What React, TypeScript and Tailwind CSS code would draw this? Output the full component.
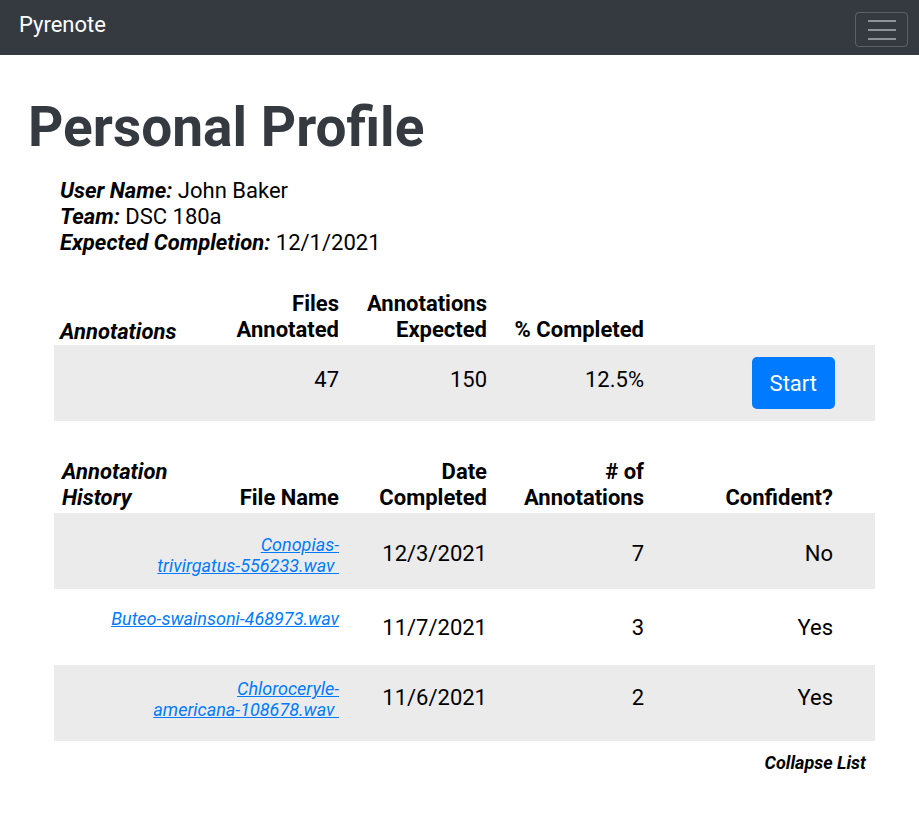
import { Fragment } from "react";

type HistoryRow = {
  lines: string[];
  date: string;
  count: number;
  confident: string;
  shaded: boolean;
  pad: string;
};

const history: HistoryRow[] = [
  {
    lines: ["Conopias-", "trivirgatus-556233.wav\u00a0"],
    date: "12/3/2021",
    count: 7,
    confident: "No",
    shaded: true,
    pad: "pt-[21px]",
  },
  {
    lines: ["Buteo-swainsoni-468973.wav"],
    date: "11/7/2021",
    count: 3,
    confident: "Yes",
    shaded: false,
    pad: "pt-[19px]",
  },
  {
    lines: ["Chloroceryle-", "americana-108678.wav\u00a0"],
    date: "11/6/2021",
    count: 2,
    confident: "Yes",
    shaded: true,
    pad: "pt-[13px]",
  },
];

const cols = "grid grid-cols-[46px_247px_148px_157px_223px] w-[821px]";

const Navbar = () => (
  <nav className="h-[55px] bg-[#343a40] flex items-start justify-between pl-[19px] pr-[11px]">
    <span className="text-white text-[22px] leading-[30px] mt-[10px]">
      Pyrenote
    </span>

    <button className="mt-[12px] w-[53px] h-[35px] rounded-[4px] border border-white/20 flex flex-col items-center justify-center gap-[7px]">
      <span className="block w-[28px] h-[2px] bg-white/45" />
      <span className="block w-[28px] h-[2px] bg-white/45" />
      <span className="block w-[28px] h-[2px] bg-white/45" />
    </button>
  </nav>
);

const HeaderCell = ({ children }: { children: React.ReactNode }) => (
  <div className="text-right pr-2 font-bold text-[22px] leading-[26px]">
    {children}
  </div>
);

const App = () => {
  return (
    <div className="min-h-screen bg-white text-black font-['Roboto',sans-serif]">
      <Navbar />

      <main className="px-6">
        <h1 className="mt-[39px] ml-[4px] text-[55px] leading-[67px] font-bold text-[#343a40]">
          Personal Profile
        </h1>

        <div className="mt-[17px] pl-9 text-[22px] leading-[26px]">
          <p>
            <b className="italic">User Name:</b> John Baker
          </p>
          <p>
            <b className="italic">Team:</b> DSC 180a
          </p>
          <p>
            <b className="italic">Expected Completion:</b> 12/1/2021
          </p>
        </div>

        {/* annotations summary */}
        <section className="ml-[30px] mt-[35px]">
          <div className={`${cols} items-end pb-[2px]`}>
            <div className="pl-[6px] font-bold italic text-[22px] leading-[26px] whitespace-nowrap translate-y-[2px]">
              Annotations
            </div>
            <HeaderCell>
              Files
              <br />
              Annotated
            </HeaderCell>
            <HeaderCell>
              Annotations
              <br />
              Expected
            </HeaderCell>
            <HeaderCell>% Completed</HeaderCell>
            <div />
          </div>

          <div className={`${cols} h-[76px] bg-[#ebebeb] text-[22px] leading-[33px]`}>
            <div />
            <div className="text-right pr-2 pt-[18px]">47</div>
            <div className="text-right pr-2 pt-[18px]">150</div>
            <div className="text-right pr-2 pt-[18px]">12.5%</div>
            <div className="flex justify-end pr-[40px] pt-[12px]">
              <button className="h-[52px] px-[18px] rounded-[5px] bg-[#007bff] text-white text-[22px]">
                Start
              </button>
            </div>
          </div>
        </section>

        {/* annotation history */}
        <section className="ml-[30px] mt-[38px]">
          <div className={`${cols} items-end pb-[2px]`}>
            <div className="pl-[8px]">
              <div className="w-[130px] font-bold italic text-[22px] leading-[26px]">
                Annotation History
              </div>
            </div>
            <HeaderCell>File Name</HeaderCell>
            <HeaderCell>
              Date
              <br />
              Completed
            </HeaderCell>
            <HeaderCell>
              # of
              <br />
              Annotations
            </HeaderCell>
            <div className="text-right pr-[42px] font-bold text-[22px] leading-[26px]">
              Confident?
            </div>
          </div>

          {history.map((row) => (
            <div
              key={row.date}
              className={`${cols} h-[76px] ${row.shaded ? "bg-[#ebebeb]" : "bg-white"} ${row.pad}`}
            >
              <div />
              <div className="text-right pr-2 text-[18px] leading-[21px] whitespace-nowrap">
                <a href="#" className="italic underline text-[#007bff]">
                  {row.lines.map((line, i) => (
                    <Fragment key={line}>
                      {i > 0 && <br />}
                      {line}
                    </Fragment>
                  ))}
                </a>
              </div>
              <div className="text-right pr-2 text-[22px] leading-[33px] pt-[3px]">
                {row.date}
              </div>
              <div className="text-right pr-2 text-[22px] leading-[33px] pt-[3px]">
                {row.count}
              </div>
              <div className="text-right pr-[42px] text-[22px] leading-[33px] pt-[3px]">
                {row.confident}
              </div>
            </div>
          ))}

          <div className="w-[821px] text-right pr-[9px] mt-[10px] font-bold italic text-[18px] leading-[24px]">
            Collapse List
          </div>
        </section>
      </main>
    </div>
  );
};

export default App;
